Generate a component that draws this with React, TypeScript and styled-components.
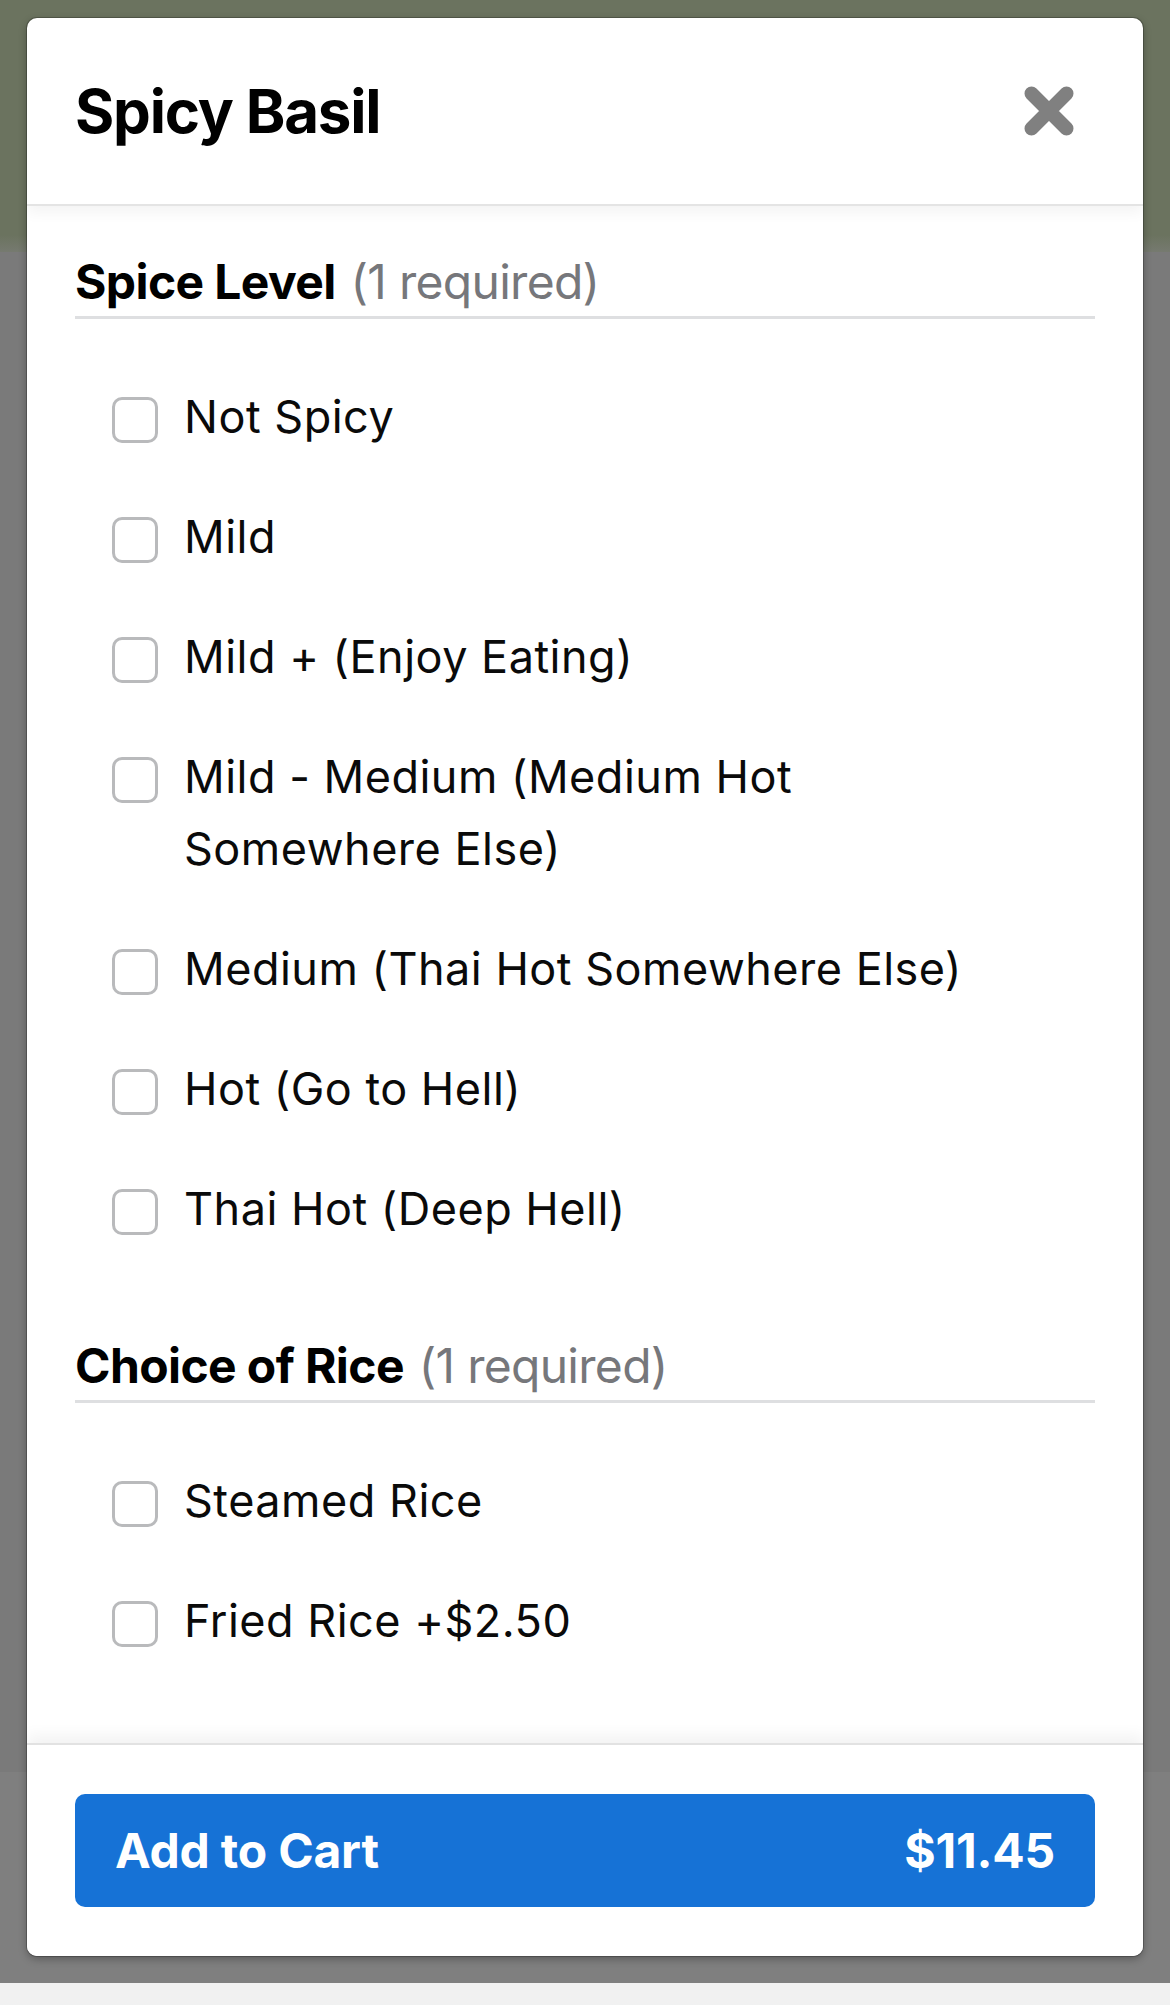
import React from "react";
import styled, { createGlobalStyle } from "styled-components";

const GlobalStyle = createGlobalStyle`
  html, body { margin: 0; padding: 0; }
  body {
    font-family: Inter, "Noto Sans", "Liberation Sans", sans-serif;
    -webkit-font-smoothing: antialiased;
  }
  * { box-sizing: border-box; }
`;

const Page = styled.div`
  position: relative;
  width: 1170px;
  height: 2005px;
  display: flex;
  flex-direction: column;
  overflow: hidden;
`;

const Band = styled.div<{ $h: number; $bg: string }>`
  flex: none;
  height: ${(p) => p.$h}px;
  background: ${(p) => p.$bg};
`;

const Modal = styled.div`
  position: absolute;
  top: 18px;
  left: 27px;
  width: 1116px;
  height: 1938px;
  background: #ffffff;
  border-radius: 10px;
  display: flex;
  flex-direction: column;
  overflow: hidden;
  box-shadow: 0 0 0 1px rgba(0, 0, 0, 0.22), 0 3px 8px rgba(0, 0, 0, 0.3);
`;

const Header = styled.header`
  position: relative;
  z-index: 1;
  flex: none;
  height: 188px;
  padding: 0 48px;
  display: flex;
  align-items: center;
  justify-content: space-between;
  border-bottom: 2px solid #e4e4e4;
  box-shadow: 0 6px 14px rgba(0, 0, 0, 0.05);
`;

const Title = styled.h1`
  margin: 0;
  font-size: 60px;
  line-height: 1;
  font-weight: 700;
  color: #000;
  letter-spacing: -1.2px;
`;

const CloseButton = styled.button`
  flex: none;
  width: 50px;
  height: 50px;
  margin-right: 21px;
  padding: 0;
  border: none;
  background: transparent;
  display: flex;
  align-items: center;
  justify-content: center;
`;

const Body = styled.div`
  flex: 1;
  overflow: hidden;
  padding: 46px 48px 0;
`;

const Section = styled.section`
  & + & {
    margin-top: 67px;
  }
`;

const SectionHeader = styled.h2`
  margin: 0;
  padding-bottom: 4px;
  border-bottom: 3px solid #dedfe1;
  font-size: 48px;
  line-height: 60px;
  font-weight: 700;
  color: #000;
  letter-spacing: -0.6px;
`;

const Required = styled.span`
  margin-left: 4px;
  font-weight: 400;
  color: #76777b;
  letter-spacing: -0.7px;
`;

const OptionList = styled.div`
  padding-top: 38px;
  display: flex;
  flex-direction: column;
`;

const Option = styled.label`
  display: flex;
  align-items: flex-start;
  gap: 26px;
  padding: 24px 95px 24px 37px;
`;

const Box = styled.span`
  flex: none;
  width: 46px;
  height: 46px;
  margin-top: 16px;
  border: 3px solid #b9babc;
  border-radius: 10px;
  background: #fff;
`;

const OptionText = styled.span`
  font-size: 45px;
  line-height: 72px;
  color: #0a0a0a;
  letter-spacing: 0.5px;
`;

const Footer = styled.footer`
  position: relative;
  z-index: 1;
  flex: none;
  height: 213px;
  padding: 49px 48px;
  border-top: 2px solid #e2e2e2;
  box-shadow: 0 -8px 14px rgba(0, 0, 0, 0.05);
  background: #fff;
`;

const CartButton = styled.button`
  width: 100%;
  height: 113px;
  padding: 0 40px;
  border: none;
  border-radius: 10px;
  background: #1672d6;
  color: #ffffff;
  display: flex;
  align-items: center;
  justify-content: space-between;
  font-family: inherit;
  font-size: 48px;
  font-weight: 700;
  letter-spacing: -0.2px;
`;

type Group = { title: string; options: string[] };

const groups: Group[] = [
  {
    title: "Spice Level",
    options: [
      "Not Spicy",
      "Mild",
      "Mild + (Enjoy Eating)",
      "Mild - Medium (Medium Hot Somewhere Else)",
      "Medium (Thai Hot Somewhere Else)",
      "Hot (Go to Hell)",
      "Thai Hot (Deep Hell)",
    ],
  },
  {
    title: "Choice of Rice",
    options: ["Steamed Rice", "Fried Rice +$2.50"],
  },
];

const CloseIcon = () => (
  <svg width="50" height="50" viewBox="0 0 50 50" aria-hidden="true">
    <path
      d="M7.5 7.5 L42.5 42.5 M42.5 7.5 L7.5 42.5"
      stroke="#808080"
      strokeWidth="14"
      strokeLinecap="round"
      fill="none"
    />
  </svg>
);

export default function App() {
  return (
    <>
      <GlobalStyle />
      <Page>
        <Band $h={252} $bg="linear-gradient(#6b735f, #6b735f 235px, #767a70)" />
        <Band $h={1520} $bg="#7a7a7a" />
        <Band $h={211} $bg="#7f7f7f" />
        <Band $h={22} $bg="#f1f1f1" />
        <Modal>
          <Header>
            <Title>Spicy Basil</Title>
            <CloseButton aria-label="Close">
              <CloseIcon />
            </CloseButton>
          </Header>
          <Body>
            {groups.map((g) => (
              <Section key={g.title}>
                <SectionHeader>
                  {g.title} <Required>(1 required)</Required>
                </SectionHeader>
                <OptionList>
                  {g.options.map((o) => (
                    <Option key={o}>
                      <Box />
                      <OptionText>{o}</OptionText>
                    </Option>
                  ))}
                </OptionList>
              </Section>
            ))}
          </Body>
          <Footer>
            <CartButton>
              <span>Add to Cart</span>
              <span>$11.45</span>
            </CartButton>
          </Footer>
        </Modal>
      </Page>
    </>
  );
}
